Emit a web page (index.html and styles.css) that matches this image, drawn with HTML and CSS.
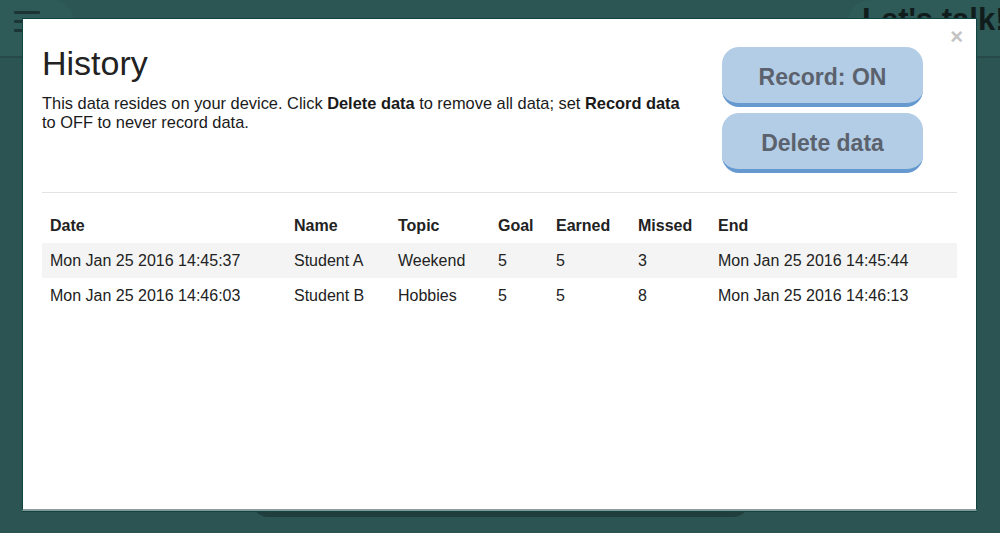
FILE: index.html
```html
<!DOCTYPE html>
<html>
<head>
<meta charset="utf-8">
<link rel="stylesheet" href="styles.css">
</head>
<body>
<div class="page">
  <header class="topbar">
    <div class="menu-box">
      <span class="bar"></span><span class="bar"></span><span class="bar"></span>
    </div>
    <div class="talk-box">Let's talk!</div>
  </header>
  <div class="card-shadow"></div>
</div>

<div class="modal">
  <span class="close">&times;</span>
  <div class="modal-head">
    <div class="intro">
      <h1 class="title">History</h1>
      <p class="desc">This data resides on your device. Click <b>Delete data</b> to remove all data; set <b>Record data</b> to OFF to never record data.</p>
    </div>
    <div class="actions">
      <button class="btn">Record: ON</button>
      <button class="btn">Delete data</button>
    </div>
  </div>
  <hr class="rule">
  <table class="history">
    <colgroup>
      <col class="c-date"><col class="c-name"><col class="c-topic"><col class="c-goal"><col class="c-earned"><col class="c-missed"><col>
    </colgroup>
    <thead>
      <tr><th>Date</th><th>Name</th><th>Topic</th><th>Goal</th><th>Earned</th><th>Missed</th><th>End</th></tr>
    </thead>
    <tbody>
      <tr><td>Mon Jan 25 2016 14:45:37</td><td>Student A</td><td>Weekend</td><td>5</td><td>5</td><td>3</td><td>Mon Jan 25 2016 14:45:44</td></tr>
      <tr><td>Mon Jan 25 2016 14:46:03</td><td>Student B</td><td>Hobbies</td><td>5</td><td>5</td><td>8</td><td>Mon Jan 25 2016 14:46:13</td></tr>
    </tbody>
  </table>
</div>
</body>
</html>
```
FILE: styles.css
```css
html, body {
  margin: 0;
  padding: 0;
}
body {
  width: 1000px;
  height: 533px;
  overflow: hidden;
  background: #2b5452;
  font-family: "Liberation Sans", Arial, sans-serif;
  color: #222;
}
.page {
  position: relative;
  width: 1000px;
  height: 533px;
}
.topbar {
  height: 56px;
  border-bottom: 2px solid #274947;
  background: #2c5654;
  display: flex;
  justify-content: space-between;
}
.menu-box {
  width: 74px;
  background: #2e5a58;
  border-top-right-radius: 22px;
  display: flex;
  flex-direction: column;
  gap: 6px;
  padding: 11px 0 0 14px;
  box-sizing: border-box;
}
.bar {
  display: block;
  width: 26px;
  height: 3px;
  background: #1c3534;
  border-radius: 1px;
}
.talk-box {
  width: 152px;
  background: #2e5a58;
  border-top-left-radius: 22px;
  box-sizing: border-box;
  padding: 2px 0 0 14px;
  font-size: 31px;
  font-weight: bold;
  color: #111c1c;
  white-space: nowrap;
  overflow: hidden;
}
.card-shadow {
  position: absolute;
  left: 252px;
  top: 470px;
  width: 497px;
  height: 47px;
  background: #203e3d;
  border-radius: 0 0 16px 16px;
}

.modal {
  position: absolute;
  left: 22px;
  top: 18px;
  width: 955px;
  height: 493px;
  box-sizing: border-box;
  background: #fff;
  border: 1px solid #0f4443;
  border-bottom: 2px solid #8a9a99;
  padding: 19px 19px;
  box-shadow: 0 1px 0 #0f4443;
}
.close {
  position: absolute;
  right: 13px;
  top: 7px;
  font-size: 22px;
  font-weight: bold;
  color: #c4c4c4;
  line-height: 22px;
}
.modal-head {
  display: flex;
  justify-content: space-between;
  align-items: flex-start;
}
.intro {
  width: 660px;
}
.title {
  margin: 5px 0 0;
  font-size: 34px;
  font-weight: normal;
  line-height: 40px;
  color: #222;
}
.desc {
  margin: 11px 0 0;
  font-size: 16.4px;
  line-height: 19px;
  color: #1a1a1a;
  max-width: 655px;
}
.actions {
  display: flex;
  flex-direction: column;
  gap: 6px;
  margin: 9px 34px 0 0;
}
.btn {
  width: 201px;
  height: 60px;
  box-sizing: border-box;
  border: none;
  border-bottom: 4px solid #6699cf;
  border-radius: 17px;
  background: #b3cde6;
  color: #5b626d;
  font-family: "Liberation Sans", Arial, sans-serif;
  font-size: 23px;
  font-weight: bold;
  padding: 4px 0 0;
}
.rule {
  margin: 19px 0 0;
  border: none;
  border-top: 1px solid #e3e3e3;
  height: 0;
}
.history {
  margin-top: 15px;
  width: 915px;
  border-collapse: collapse;
  table-layout: fixed;
  font-size: 16px;
  color: #222;
}
.c-date { width: 244px; }
.c-name { width: 104px; }
.c-topic { width: 100px; }
.c-goal { width: 58px; }
.c-earned { width: 82px; }
.c-missed { width: 80px; }
.history th, .history td {
  text-align: left;
  padding: 8px 8px;
  line-height: 19px;
  white-space: nowrap;
}
.history th {
  font-weight: bold;
  color: #222;
}
.history tbody tr:nth-child(odd) {
  background: #f4f4f4;
}
```
